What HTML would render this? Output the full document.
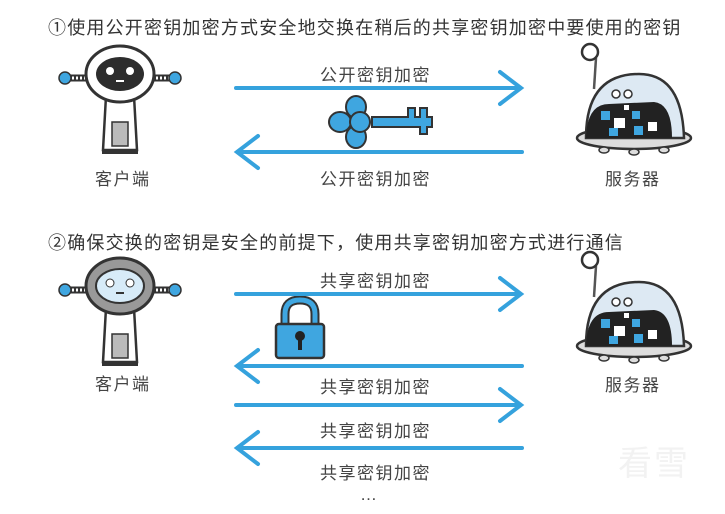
<!DOCTYPE html>
<html><head><meta charset="utf-8"><style>
body{margin:0;width:725px;height:514px;background:#fff;overflow:hidden;position:relative;font-family:"Liberation Sans","Noto Sans CJK SC",sans-serif;color:#444}
.t{position:absolute;white-space:nowrap;font-size:17px;letter-spacing:1.5px}
.h{font-size:18px;letter-spacing:1.2px;color:#333}
svg{position:absolute;left:0;top:0}
</style></head><body>
<svg width="725" height="514" viewBox="0 0 725 514">
<defs>
<g id="robot">
 <line x1="-52" y1="0" x2="52" y2="0" stroke="#333" stroke-width="7"/>
 <line x1="-52" y1="0" x2="52" y2="0" stroke="#fff" stroke-width="3" stroke-dasharray="2 2"/>
 <circle cx="-55" cy="0" r="6" fill="#3fa6e0" stroke="#333" stroke-width="1.5"/>
 <circle cx="55" cy="0" r="6" fill="#3fa6e0" stroke="#333" stroke-width="1.5"/>
 <path d="M-14 18 L-17 72 L17 72 L14 18Z" fill="#fff" stroke="#333" stroke-width="2.5"/>
 <rect x="-8" y="44" width="16" height="24" fill="#bbb" stroke="#333" stroke-width="1.5"/>
 <line x1="-18" y1="74" x2="18" y2="74" stroke="#333" stroke-width="4"/>
</g>
<g id="server">
 <line x1="-40" y1="-25" x2="-38" y2="-56" stroke="#555" stroke-width="2.5"/>
 <circle cx="-44" cy="-62" r="8" fill="#fff" stroke="#333" stroke-width="2.5"/>
 <ellipse cx="0" cy="24" rx="57" ry="11" fill="#ddd" stroke="#333" stroke-width="2.5"/>
 <path d="M-48 24 Q-48 -40 5 -40 Q48 -40 50 24Z" fill="#dde9f3" stroke="#333" stroke-width="2.5"/>
 <path d="M-48 24 Q-47 -10 -25 -10 L20 -12 Q38 -10 38 24Z" fill="#222"/>
 <rect x="-33" y="-3" width="9" height="9" fill="#3fa6e0"/><rect x="-20" y="4" width="11" height="10" fill="#fff"/>
 <rect x="-2" y="-3" width="8" height="8" fill="#3fa6e0"/><rect x="-25" y="14" width="9" height="8" fill="#3fa6e0"/>
 <rect x="0" y="12" width="9" height="9" fill="#3fa6e0"/><rect x="14" y="8" width="9" height="9" fill="#fff"/>
 <rect x="-10" y="-9" width="5" height="5" fill="#fff"/>
 <circle cx="-18" cy="-20" r="4" fill="#fff" stroke="#333" stroke-width="1.5"/>
 <circle cx="-6" cy="-20" r="4" fill="#fff" stroke="#333" stroke-width="1.5"/>
 <ellipse cx="-30" cy="36" rx="5" ry="3" fill="#ddd" stroke="#333" stroke-width="1.5"/>
 <ellipse cx="0" cy="38" rx="5" ry="3" fill="#ddd" stroke="#333" stroke-width="1.5"/>
 <ellipse cx="30" cy="36" rx="5" ry="3" fill="#ddd" stroke="#333" stroke-width="1.5"/>
</g>
<g id="ar" stroke="#35a2dd" stroke-width="4" fill="none" stroke-linecap="round">
 <line x1="236" y1="0" x2="520" y2="0"/><path d="M500 -16 L521 0 L500 16"/>
</g>
<g id="al" stroke="#35a2dd" stroke-width="4" fill="none" stroke-linecap="round">
 <line x1="238" y1="0" x2="522" y2="0"/><path d="M258 -16 L237 0 L258 16"/>
</g>
</defs>
<g transform="translate(120,78)">
 <use href="#robot"/>
 <ellipse cx="0" cy="-4" rx="34" ry="28" fill="#fff" stroke="#333" stroke-width="3"/>
 <ellipse cx="0" cy="-4" rx="24" ry="17" fill="#2d2d2d"/>
 <circle cx="-10" cy="-7" r="4" fill="#fff"/><circle cx="10" cy="-7" r="4" fill="#fff"/>
 <line x1="-4" y1="3" x2="4" y2="3" stroke="#fff" stroke-width="2"/>
</g>
<g transform="translate(120,290)">
 <use href="#robot"/>
 <ellipse cx="0" cy="-4" rx="34" ry="28" fill="#999" stroke="#333" stroke-width="3"/>
 <ellipse cx="0" cy="-4" rx="24" ry="17" fill="#d7ebf8" stroke="#333" stroke-width="2"/>
 <circle cx="-10" cy="-7" r="4" fill="#fff" stroke="#333"/><circle cx="10" cy="-7" r="4" fill="#fff" stroke="#333"/>
 <line x1="-4" y1="3" x2="4" y2="3" stroke="#333" stroke-width="2"/>
</g>
<g transform="translate(634,114)"><use href="#server"/></g>
<g transform="translate(634,322)"><use href="#server"/></g>
<g transform="translate(352,122)" stroke="#333" stroke-width="2" fill="#3fa6e0">
 <path d="M20 -5 H56 V-14 H63 V-5 H68 V-14 H75 V-5 H80 V5 H75 V12 H68 V5 H20Z"/>
 <ellipse cx="4" cy="-15" rx="10" ry="11"/><ellipse cx="4" cy="15" rx="10" ry="11"/><ellipse cx="-12" cy="0" rx="11" ry="10"/><circle cx="8" cy="0" r="10"/>
</g>
<g transform="translate(300,330)">
 <path d="M-15 -4 V-16 Q-15 -30 0 -30 Q15 -30 15 -16 V-4" fill="none" stroke="#333" stroke-width="9"/>
 <path d="M-15 -4 V-16 Q-15 -30 0 -30 Q15 -30 15 -16 V-4" fill="none" stroke="#3fa6e0" stroke-width="5"/>
 <rect x="-24" y="-6" width="48" height="34" rx="3" fill="#3fa6e0" stroke="#333" stroke-width="2.5"/>
 <circle cx="0" cy="6" r="5" fill="#222"/><rect x="-2" y="8" width="4" height="12" fill="#222"/>
</g>
<use href="#ar" y="88"/><use href="#al" y="152"/>
<use href="#ar" y="294"/><use href="#al" y="366"/>
<use href="#ar" y="405"/><use href="#al" y="448"/>
</svg>
<div class="t h" style="left:48px;top:14px">①使用公开密钥加密方式安全地交换在稍后的共享密钥加密中要使用的密钥</div>
<div class="t h" style="left:48px;top:229px">②确保交换的密钥是安全的前提下，使用共享密钥加密方式进行通信</div>
<div class="t" style="left:320px;top:61px">公开密钥加密</div>
<div class="t" style="left:320px;top:165px">公开密钥加密</div>
<div class="t" style="left:95px;top:165px">客户端</div>
<div class="t" style="left:605px;top:165px">服务器</div>
<div class="t" style="left:320px;top:267px">共享密钥加密</div>
<div class="t" style="left:320px;top:373px">共享密钥加密</div>
<div class="t" style="left:320px;top:417px">共享密钥加密</div>
<div class="t" style="left:320px;top:459px">共享密钥加密</div>
<div class="t" style="left:95px;top:370px">客户端</div>
<div class="t" style="left:605px;top:371px">服务器</div>
<div class="t" style="left:360px;top:485px">…</div>
<div class="t" style="left:618px;top:436px;font-size:34px;color:#f2f2f2;letter-spacing:2px">看雪</div>
</body></html>
